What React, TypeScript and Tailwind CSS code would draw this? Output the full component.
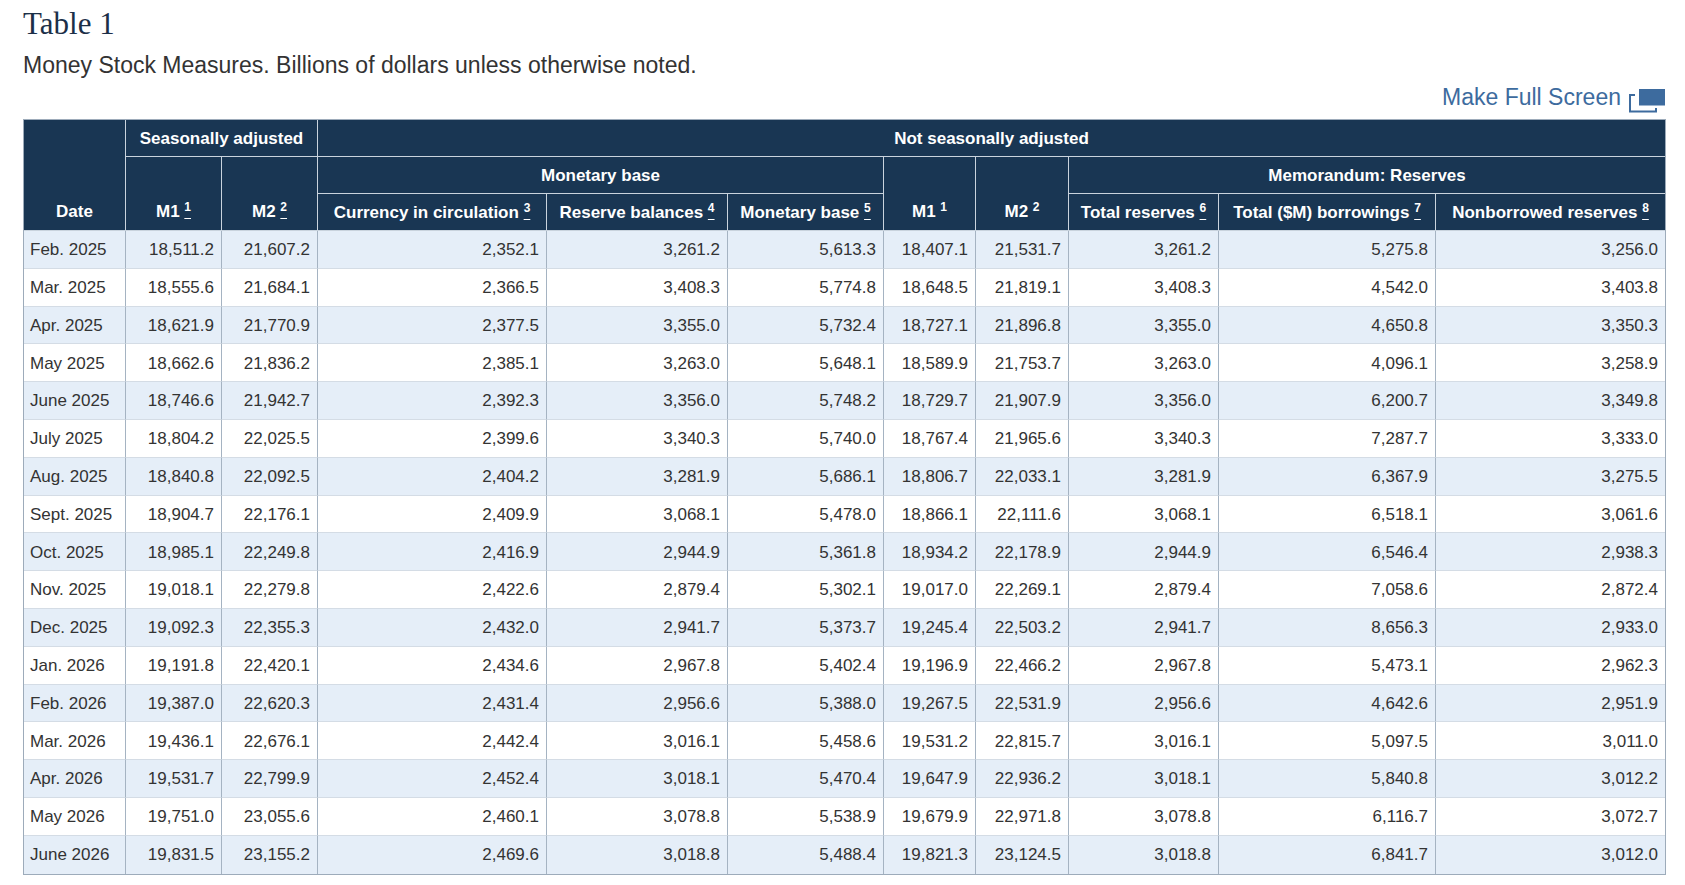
import React from 'react';

type Row = [string, ...string[]];

const rows: Row[] = [
  ['Feb. 2025', '18,511.2', '21,607.2', '2,352.1', '3,261.2', '5,613.3', '18,407.1', '21,531.7', '3,261.2', '5,275.8', '3,256.0'],
  ['Mar. 2025', '18,555.6', '21,684.1', '2,366.5', '3,408.3', '5,774.8', '18,648.5', '21,819.1', '3,408.3', '4,542.0', '3,403.8'],
  ['Apr. 2025', '18,621.9', '21,770.9', '2,377.5', '3,355.0', '5,732.4', '18,727.1', '21,896.8', '3,355.0', '4,650.8', '3,350.3'],
  ['May 2025', '18,662.6', '21,836.2', '2,385.1', '3,263.0', '5,648.1', '18,589.9', '21,753.7', '3,263.0', '4,096.1', '3,258.9'],
  ['June 2025', '18,746.6', '21,942.7', '2,392.3', '3,356.0', '5,748.2', '18,729.7', '21,907.9', '3,356.0', '6,200.7', '3,349.8'],
  ['July 2025', '18,804.2', '22,025.5', '2,399.6', '3,340.3', '5,740.0', '18,767.4', '21,965.6', '3,340.3', '7,287.7', '3,333.0'],
  ['Aug. 2025', '18,840.8', '22,092.5', '2,404.2', '3,281.9', '5,686.1', '18,806.7', '22,033.1', '3,281.9', '6,367.9', '3,275.5'],
  ['Sept. 2025', '18,904.7', '22,176.1', '2,409.9', '3,068.1', '5,478.0', '18,866.1', '22,111.6', '3,068.1', '6,518.1', '3,061.6'],
  ['Oct. 2025', '18,985.1', '22,249.8', '2,416.9', '2,944.9', '5,361.8', '18,934.2', '22,178.9', '2,944.9', '6,546.4', '2,938.3'],
  ['Nov. 2025', '19,018.1', '22,279.8', '2,422.6', '2,879.4', '5,302.1', '19,017.0', '22,269.1', '2,879.4', '7,058.6', '2,872.4'],
  ['Dec. 2025', '19,092.3', '22,355.3', '2,432.0', '2,941.7', '5,373.7', '19,245.4', '22,503.2', '2,941.7', '8,656.3', '2,933.0'],
  ['Jan. 2026', '19,191.8', '22,420.1', '2,434.6', '2,967.8', '5,402.4', '19,196.9', '22,466.2', '2,967.8', '5,473.1', '2,962.3'],
  ['Feb. 2026', '19,387.0', '22,620.3', '2,431.4', '2,956.6', '5,388.0', '19,267.5', '22,531.9', '2,956.6', '4,642.6', '2,951.9'],
  ['Mar. 2026', '19,436.1', '22,676.1', '2,442.4', '3,016.1', '5,458.6', '19,531.2', '22,815.7', '3,016.1', '5,097.5', '3,011.0'],
  ['Apr. 2026', '19,531.7', '22,799.9', '2,452.4', '3,018.1', '5,470.4', '19,647.9', '22,936.2', '3,018.1', '5,840.8', '3,012.2'],
  ['May 2026', '19,751.0', '23,055.6', '2,460.1', '3,078.8', '5,538.9', '19,679.9', '22,971.8', '3,078.8', '6,116.7', '3,072.7'],
  ['June 2026', '19,831.5', '23,155.2', '2,469.6', '3,018.8', '5,488.4', '19,821.3', '23,124.5', '3,018.8', '6,841.7', '3,012.0'],
];

// footnote marker, linked ones are underlined
const Note = ({ n, link = true }: { n: number; link?: boolean }) =>
  link ? (
    <>
      {' '}
      <a className="underline cursor-pointer">
        <sup className="text-[12px]">{n}</sup>
      </a>
    </>
  ) : (
    <>
      {' '}
      <sup className="text-[12px]">{n}</sup>
    </>
  );

const FullScreenIcon = () => (
  <svg width="37" height="24" viewBox="0 0 37 24" className="mt-[3px]">
    <rect x="2" y="6" width="26" height="16.5" fill="none" stroke="#3d6b9e" strokeWidth="2" />
    <rect x="7" y="-2" width="32" height="21" fill="#fff" />
    <rect x="11" y="0" width="26" height="16.5" fill="#3d6b9e" />
  </svg>
);

export default function App() {
  const th = 'bg-[#193653] text-white font-bold text-[17px] border-r border-b border-[#c9d3dd]';
  return (
    <div className="min-h-screen bg-white pl-[23px] font-['Liberation_Sans',Arial,sans-serif]">
      <h1 className="pt-[8px] text-[31px] leading-none text-[#1c2f48] font-['Liberation_Serif','Times_New_Roman',serif] font-normal">
        Table 1
      </h1>
      <p className="mt-[15px] text-[23px] leading-none text-[#333]">
        Money Stock Measures. Billions of dollars unless otherwise noted.
      </p>

      <div className="mt-[9px] flex h-[33px] w-[1642px] items-start justify-end gap-[7px]">
        <a className="cursor-pointer text-[23px] leading-none text-[#3d6b9e]">Make Full Screen</a>
        <FullScreenIcon />
      </div>

      <table className="w-[1641px] table-fixed border-separate border-spacing-0 border border-[#9dabba] text-[17px] text-[#333]">
        <colgroup>
          <col className="w-[102px]" />
          <col className="w-[96px]" />
          <col className="w-[96px]" />
          <col className="w-[229px]" />
          <col className="w-[181px]" />
          <col className="w-[156px]" />
          <col className="w-[92px]" />
          <col className="w-[93px]" />
          <col className="w-[150px]" />
          <col className="w-[217px]" />
          <col className="w-[229px]" />
        </colgroup>
        <thead>
          <tr className="h-[37px]">
            <th rowSpan={3} className={`${th} align-bottom pb-[6px]`}>Date</th>
            <th colSpan={2} className={`${th} align-middle pt-[1px]`}>Seasonally adjusted</th>
            <th colSpan={8} className={`${th} align-middle pt-[1px] border-r-0`}>Not seasonally adjusted</th>
          </tr>
          <tr className="h-[37px]">
            <th rowSpan={2} className={`${th} align-bottom pb-[6px]`}>M1<Note n={1} /></th>
            <th rowSpan={2} className={`${th} align-bottom pb-[6px]`}>M2<Note n={2} /></th>
            <th colSpan={3} className={`${th} align-middle pt-[1px]`}>Monetary base</th>
            <th rowSpan={2} className={`${th} align-bottom pb-[6px]`}>M1<Note n={1} link={false} /></th>
            <th rowSpan={2} className={`${th} align-bottom pb-[6px]`}>M2<Note n={2} link={false} /></th>
            <th colSpan={3} className={`${th} align-middle pt-[1px] border-r-0`}>Memorandum: Reserves</th>
          </tr>
          <tr className="h-[37px]">
            <th className={`${th} align-middle pt-[2px]`}>Currency in circulation<Note n={3} /></th>
            <th className={`${th} align-middle pt-[2px]`}>Reserve balances<Note n={4} /></th>
            <th className={`${th} align-middle pt-[2px]`}>Monetary base<Note n={5} /></th>
            <th className={`${th} align-middle pt-[2px]`}>Total reserves<Note n={6} /></th>
            <th className={`${th} align-middle pt-[2px]`}>Total ($M) borrowings<Note n={7} /></th>
            <th className={`${th} align-middle pt-[2px] border-r-0`}>Nonborrowed reserves<Note n={8} /></th>
          </tr>
        </thead>
        <tbody>
          {rows.map((r, i) => {
            const last = i === rows.length - 1;
            return (
              <tr key={r[0]} className={`h-[37.8px] ${i % 2 === 0 ? 'bg-[#e5eef8]' : 'bg-white'}`}>
                {r.map((c, j) => (
                  <td
                    key={j}
                    className={`align-middle pt-[1px] whitespace-nowrap border-[#d4dce5] ${last ? '' : 'border-b'} ${
                      j === r.length - 1 ? '' : 'border-r border-r-[#a5b3c2]'
                    } ${j === 0 ? 'pl-[6px] text-left' : 'pr-[7px] text-right'}`}
                  >
                    {c}
                  </td>
                ))}
              </tr>
            );
          })}
        </tbody>
      </table>
    </div>
  );
}
